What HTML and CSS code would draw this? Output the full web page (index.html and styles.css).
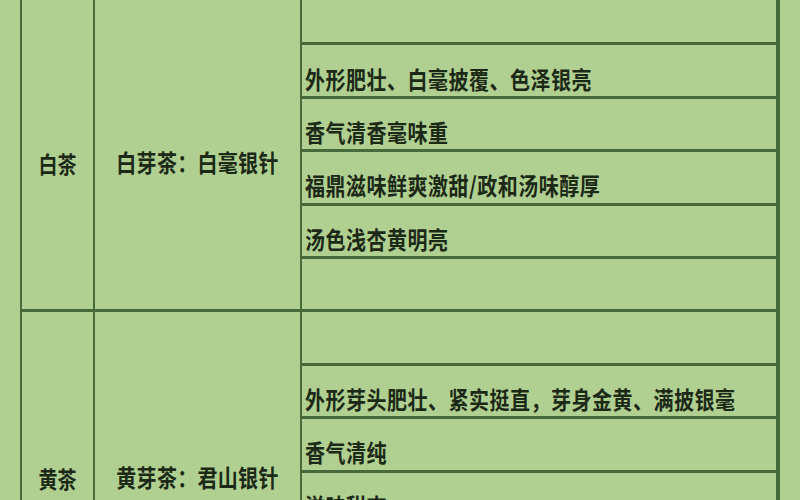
FILE: index.html
```html
<!DOCTYPE html>
<html lang="zh-CN">
<head>
<meta charset="utf-8">
<title>茶类</title>
<link rel="stylesheet" href="styles.css">
</head>
<body>
<div class="page">
  <div class="sheet">
    <div class="cat grp-a"><span class="t">白茶</span></div>
    <div class="name grp-a"><span class="t">白芽茶：白毫银针</span></div>
    <div class="desc"></div>
    <div class="desc"><span class="t">外形肥壮、白毫披覆、色泽银亮</span></div>
    <div class="desc"><span class="t">香气清香毫味重</span></div>
    <div class="desc"><span class="t">福鼎滋味鲜爽激甜/政和汤味醇厚</span></div>
    <div class="desc"><span class="t">汤色浅杏黄明亮</span></div>
    <div class="desc"></div>

    <div class="cat grp-b"><span class="t">黄茶</span></div>
    <div class="name grp-b"><span class="t">黄芽茶：君山银针</span></div>
    <div class="desc"></div>
    <div class="desc"><span class="t">外形芽头肥壮、紧实挺直，芽身金黄、满披银毫</span></div>
    <div class="desc"><span class="t">香气清纯</span></div>
    <div class="desc"><span class="t">滋味甜爽</span></div>
    <div class="desc"></div>
    <div class="desc"></div>
  </div>
</div>
</body>
</html>
```

FILE: styles.css
```css
html, body {
  margin: 0;
  padding: 0;
  background: #afd091;
}
.page {
  width: 800px;
  height: 500px;
  overflow: hidden;
  background: #afd091;
}
.sheet {
  display: grid;
  grid-template-columns: 71px 205px 474px;
  grid-auto-rows: 50.4px;
  column-gap: 2px;
  row-gap: 3px;
  padding: 3px 2px;
  margin: -11px 0 0 20px;
  width: 756px;
  background: #476a3b;
  font-family: "Noto Sans CJK SC", "Noto Sans", sans-serif;
  font-weight: 700;
  font-size: 20px;
  color: #1c2916;
}
.cat, .name, .desc {
  background: #afd091;
  display: flex;
  align-items: center;
  box-sizing: border-box;
}
.cat, .name {
  grid-row: span 6;
  justify-content: center;
}
.cat { grid-column: 1; }
.name { grid-column: 2; }
.desc { grid-column: 3; padding: 16px 0 0 3px; }
.grp-a { padding-top: 23px; }
.grp-b { padding-top: 12px; }
.t {
  display: inline-block;
  white-space: nowrap;
  letter-spacing: 0.5px;
  transform: scaleY(1.2);
  line-height: 1;
}
.cat .t { letter-spacing: 0; font-size: 19px; }
.name .t { letter-spacing: 0.3px; }
```
